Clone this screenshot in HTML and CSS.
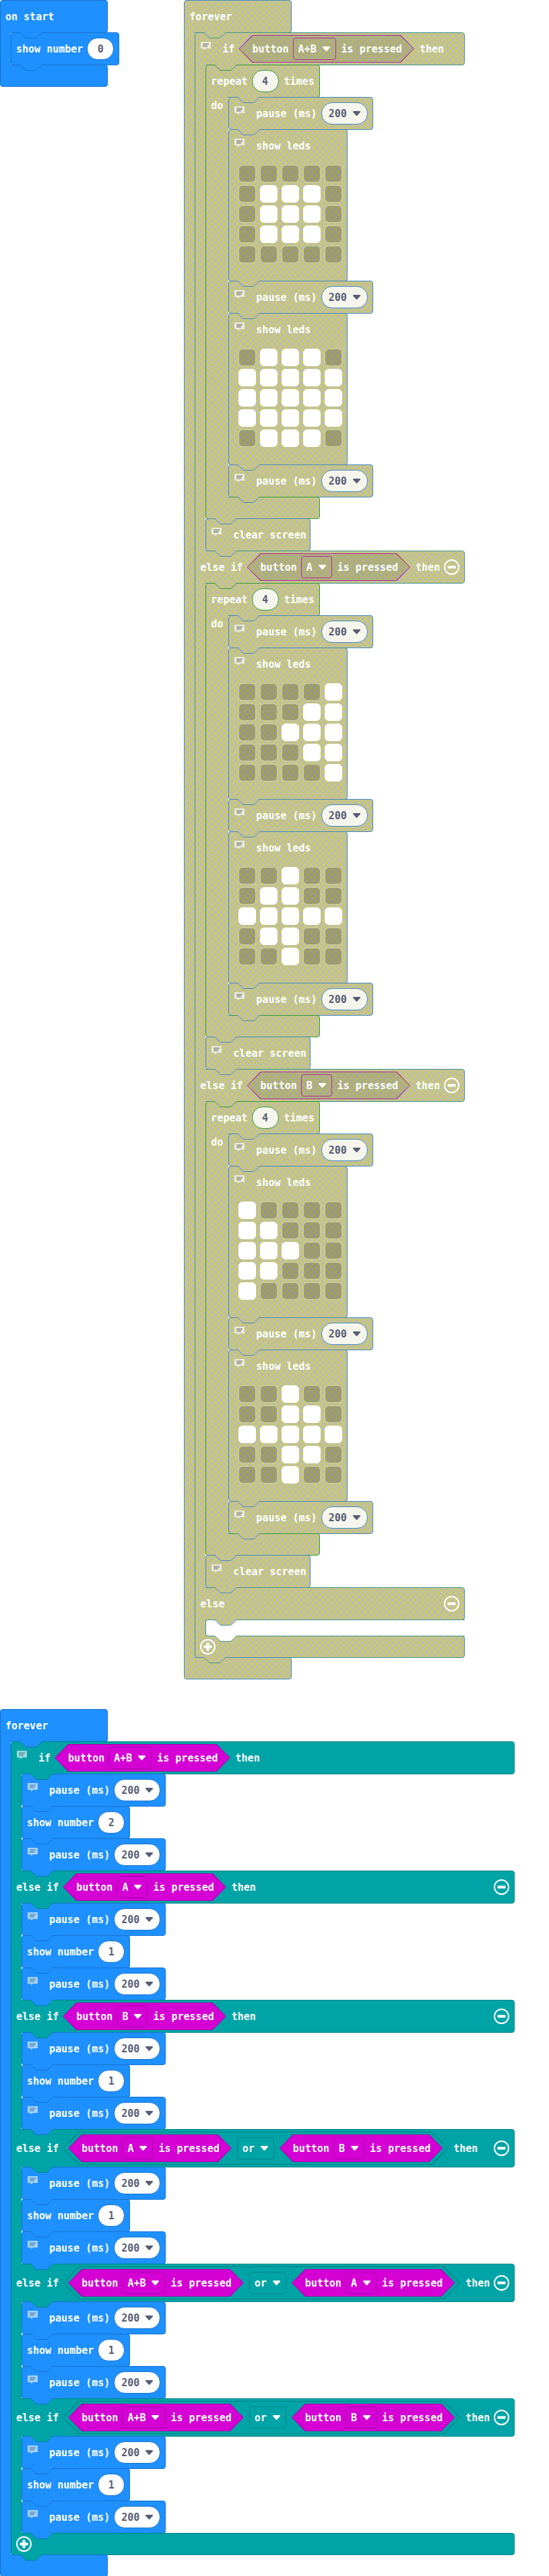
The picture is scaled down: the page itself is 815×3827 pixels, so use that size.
FILE: index.html
```html
<!DOCTYPE html>
<html lang="en">
<head>
<meta charset="utf-8">
<meta name="viewport" content="width=device-width, initial-scale=1">
<title>Blocks workspace</title>
<link rel="stylesheet" href="styles.css">
</head>
<body>
<svg class="defs" aria-hidden="true">
  <defs>
    <pattern id="hatch" width="9" height="9" patternUnits="userSpaceOnUse">
      <path d="M0 0H9V9H0Z" fill="#bbb"/>
      <path d="M-1 -1L10 10M10 -1L-1 10" stroke="#d4d430" stroke-width="1.2"/>
    </pattern>
  </defs>
</svg>
<main class="workspace" id="workspace"></main>
<script src="blocks.js"></script>
</body>
</html>
```

FILE: styles.css
```css
:root {
  --hatch: url("data:image/svg+xml,%3Csvg xmlns='http://www.w3.org/2000/svg' width='9' height='9'%3E%3Cpath d='M0 0H9V9H0Z' fill='%23bbb'/%3E%3Cpath d='M-1 -1L10 10M10 -1L-1 10' stroke='%23d4d430' stroke-width='1.2'/%3E%3C/svg%3E");
}

* { box-sizing: border-box; }

body {
  margin: 0;
  background: #fff;
  color: #fff;
  font: bold 15px/20px "DejaVu Sans Mono", "Liberation Mono", monospace;
}

input, select, button { font: inherit; margin: 0; }

.defs { position: absolute; width: 0; height: 0; }

.workspace {
  display: flex;
  flex-direction: column;
  align-items: flex-start;
  gap: 45px;
  padding-bottom: 1px;
}
.side-by-side {
  display: flex;
  align-items: flex-start;
  gap: 96px;
}

/* Themes */
.blue { --fill: #1e90ff; --edge: #1873cc; }
.teal { --fill: #00a4a6; --edge: #008387; }
.pink { --fill: #d400d4; --edge: #aa00aa; }
.off { --fill: var(--hatch); }
.off.blue { --edge: #4488c0; }
.off.teal { --edge: #3c9490; }
.off.green { --edge: #309a38; }
.off.pink { --edge: #b02a98; }

/* Blocks */
.block {
  display: flex;
  flex-direction: column;
  align-items: stretch;
}
.block.hat, .block.green { align-items: flex-start; }
.hat > .row { width: 160px; }
.block.green > .row { width: 170px; }

.row {
  position: relative;
  display: flex;
  align-items: center;
  gap: 8px;
  height: 49px;
  margin-bottom: -1px;
  padding: 0 7px;
  border: 1px solid var(--edge);
  border-radius: 4px;
  background: var(--fill);
  white-space: nowrap;
}
.row.tall { height: 57px; }
.row.foot { height: 33px; }
.row.open { border-bottom-left-radius: 0; }
.row.joined { border-top-left-radius: 0; }

.mouth { display: flex; }
.arm {
  position: relative;
  z-index: 1;
  flex: none;
  width: 16px;
  margin-bottom: -1px;
  padding: 3px 0 0 7px;
  border-left: 1px solid var(--edge);
  background: var(--fill);
}
.green > .mouth > .arm { width: 34px; }
.stack {
  display: flex;
  flex-direction: column;
  align-items: flex-start;
}
.mouth.vacant > .arm {
  width: 20px;
  margin-right: -4px;
}
.gap {
  position: relative;
  z-index: 2;
  flex: 1;
  height: 25px;
  margin-bottom: -1px;
  border: 1px solid var(--edge);
  border-right: 0;
  border-radius: 4px 0 0 4px;
  background: #fff;
}

.notch {
  position: absolute;
  z-index: 2;
  top: -1px;
  left: 11px;
  width: 36px;
  height: 9px;
  overflow: visible;
}
.notch.in { left: 27px; }
.notch.deep { left: 45px; }
.notch .line { fill: none; stroke: var(--edge); stroke-width: 1; }
.notch .body { fill: var(--fill); }
.notch.off .body { fill: url(#hatch); }
.notch.empty .body { fill: #fff; }

/* Row contents */
.label { margin-right: -2px; }
.comment {
  align-self: flex-start;
  flex: none;
  width: 15px;
  height: 13px;
  margin: 13px 9px 0 1px;
}
.comment .bubble { fill: #fff; opacity: .6; }
.comment .mark { fill: #1a5070; opacity: .32; }
.off .comment .bubble { opacity: .65; }
.off .comment .mark { fill: #888; opacity: .6; }

.toggle {
  flex: none;
  width: 23px;
  height: 23px;
  padding: 0;
  border: 0;
  background: none;
  color: #fff;
}
.toggle svg { display: block; }
.toggle.end { margin-left: auto; }

.hex {
  position: relative;
  display: flex;
  align-items: center;
  gap: 8px;
  height: 41px;
  padding: 0 20px;
  background: var(--edge);
  clip-path: polygon(20px 0, calc(100% - 20px) 0, 100% 50%, calc(100% - 20px) 100%, 20px 100%, 0 50%);
}
.hex::before {
  content: "";
  position: absolute;
  inset: 1px;
  background: var(--fill);
  clip-path: polygon(20px 0, calc(100% - 20px) 0, 100% 50%, calc(100% - 20px) 100%, 20px 100%, 0 50%);
}
.hex.off::before {
  background: linear-gradient(rgba(0, 0, 0, .1), rgba(0, 0, 0, .1)), var(--hatch);
}
.hex > * { position: relative; }
.hex.outer {
  height: 49px;
  padding: 0 8px;
  clip-path: polygon(24px 0, calc(100% - 24px) 0, 100% 50%, calc(100% - 24px) 100%, 24px 100%, 0 50%);
}
.hex.outer::before {
  clip-path: polygon(24px 0, calc(100% - 24px) 0, 100% 50%, calc(100% - 24px) 100%, 24px 100%, 0 50%);
}

.field { position: relative; display: flex; }
.field select {
  appearance: none;
  height: 33px;
  padding: 0 27px 0 7px;
  border: 1px solid var(--edge);
  border-radius: 4px;
  background: transparent;
  color: #fff;
}
.field .arrow {
  position: absolute;
  top: 13px;
  right: 9px;
  width: 11px;
  height: 7px;
  fill: currentColor;
  pointer-events: none;
}
.field.pill { color: #575e75; }
.field.pill select {
  padding: 0 29px 0 10px;
  border-radius: 16px;
  background: #fff;
  color: #575e75;
}
.field.pill .arrow { right: 11px; }
.number {
  width: 40px;
  height: 33px;
  padding: 0;
  border: 1px solid var(--edge);
  border-radius: 16px;
  background: #fff;
  color: #575e75;
  text-align: center;
}
.off .field.pill select, .off .number { background: rgba(255, 255, 255, .84); }

/* LED matrix */
.row.matrix {
  flex-direction: column;
  align-items: stretch;
  gap: 0;
  height: auto;
  padding: 0 7px 26px;
}
.matrix .title {
  display: flex;
  align-items: center;
  gap: 8px;
  height: 47px;
}
.leds {
  display: grid;
  grid-template-columns: repeat(5, 26px);
  gap: 4px 6px;
  padding: 5px 0 0 7px;
}
.led {
  appearance: none;
  width: 26px;
  height: 26px;
  border: 1px solid rgba(255, 255, 255, .2);
  border-radius: 6px;
  background: rgba(0, 0, 0, .2);
  background-clip: padding-box;
}
.led:checked { background: #fff; border-color: #fff; }
```

FILE: blocks.js
```js
const notch = (theme, place = "") =>
  `<svg class="notch ${theme} ${place}" viewBox="0 0 36 9" aria-hidden="true">
    <path class="body" d="M0 0c2 0 3 1 4 2l4 4c1 1 2 2 4 2h12c2 0 3-1 4-2l4-4c1-1 2-2 4-2z"/>
    <path class="line" d="M0 .5c2 0 3 1 4 2l4 4c1 1 2 2 4 2h12c2 0 3-1 4-2l4-4c1-1 2-2 4-2"/>
  </svg>`;

const label = (text) => `<span class="label">${text}</span>`;

const comment =
  `<svg class="comment" viewBox="0 0 15 13" aria-hidden="true">
    <path class="bubble" d="M0 0H15V10H8L5.500 12.500L4 10H0Z"/>
    <path class="mark" d="M3 2H12V5H10V8H3Z"/>
  </svg>`;

const arrow =
  `<svg class="arrow" viewBox="0 0 11 7" aria-hidden="true">
    <path d="M1 0H10Q11 0 11 1Q11 2 9 3.500L6.500 6.500Q5.500 7.400 4.500 6.500L2 3.500Q0 2 0 1Q0 0 1 0Z"/>
  </svg>`;

const choice = (value, name, kind = "") =>
  `<span class="field ${kind}"><select aria-label="${name}"><option>${value}</option></select>${arrow}</span>`;

const number = (value, name) =>
  `<input class="number" type="text" inputmode="numeric" value="${value}" aria-label="${name}">`;

const toggle = (sign, name, place = "") =>
  `<button class="toggle ${place}" type="button" aria-label="${name}">
    <svg width="23" height="23" viewBox="0 0 23 23" fill="none" stroke="currentColor">
      <circle cx="11.500" cy="11.500" r="10.500" stroke-width="2"/>
      <path stroke-width="4" d="${sign === "+" ? "M5.500 11.500H17.500M11.500 5.500V17.500" : "M5.500 11.500H17.500"}"/>
    </svg>
  </button>`;

const row = (theme, content, extra = "") =>
  `<div class="row ${theme} ${extra}">${content}</div>`;

const pressed = (button, off) =>
  `<span class="hex pink ${off}">${label("button")}${choice(button, "button")}${label("is pressed")}</span>`;

const either = (a, b) =>
  `<span class="hex outer teal">${pressed(a, "")}${choice("or", "operator")}${pressed(b, "")}</span>`;

const mouth = (content, arm = "") =>
  `<div class="mouth"><div class="arm">${arm}</div><div class="stack">${content}</div></div>`;

const pause = (off, above) =>
  row(`blue ${off}`, notch(above) + comment + label("pause (ms)") + choice("200", "pause (ms)", "pill"));

const showNumber = (value, above) =>
  row("blue", notch(above) + label("show number") + number(value, "show number"));

const showLeds = (pattern) => {
  const leds = [...pattern.replace(/ /g, "")].map((c, i) =>
    `<input class="led" type="checkbox" aria-label="LED ${i + 1}"${c === "#" ? " checked" : ""}>`).join("");
  return row("blue off",
    `${notch("blue off")}<div class="title">${comment}${label("show leds")}</div><div class="leds">${leds}</div>`,
    "matrix");
};

const hat = (theme, name, content, below) =>
  `<section class="block hat ${theme}">
    ${row(theme, label(name), "open")}
    ${mouth(content)}
    ${row(theme, notch(below, "in"), "foot joined")}
  </section>`;

const repeat = (frames) =>
  `<div class="block green off">
    ${row("green off", notch("green off") + label("repeat") + number(4, "repeat times") + label("times"), "open")}
    ${mouth(pause("off", "blue off") + frames.map((f) => showLeds(f) + pause("off", "blue off")).join(""), "do")}
    ${row("green off", notch("blue off", "deep"), "foot joined")}
  </div>`;

const clearScreen = row("blue off", notch("blue off") + comment + label("clear screen"));

const animations = [
  ["A+B", ["..... .###. .###. .###. .....", ".###. ##### ##### ##### .###."]],
  ["A", ["....# ...## ..### ...## ....#", "..#.. .##.. ##### .##.. ..#.."]],
  ["B", ["#.... ##... ###.. ##... #....", "..#.. ..##. ##### ..##. ..#.."]],
];

const animated = `<div class="block teal off">
  ${animations.map(([button, frames], i) =>
    row("teal off",
      (i ? notch("blue off", "in") + label("else if") : notch("teal off") + comment + label("if")) +
      pressed(button, "off") + label("then") + (i ? toggle("-", "remove branch", "end") : ""),
      i ? "open joined" : "open") +
    mouth(repeat(frames) + clearScreen)).join("")}
  ${row("teal off", notch("blue off", "in") + label("else") + toggle("-", "remove branch", "end"), "open joined")}
  <div class="mouth vacant"><div class="arm"></div><div class="gap">${notch("teal off")}</div></div>
  ${row("teal off", notch("teal off empty", "in") + toggle("+", "add branch"), "foot joined")}
</div>`;

const branches = [
  [pressed("A+B", ""), 2, ""],
  [pressed("A", ""), 1, ""],
  [pressed("B", ""), 1, ""],
  [either("A", "B"), 1, "tall"],
  [either("A+B", "A"), 1, "tall"],
  [either("A+B", "B"), 1, "tall"],
];

const counted = `<div class="block teal">
  ${branches.map(([test, value, size], i) =>
    row("teal",
      (i ? notch("blue", "in") + label("else if") : notch("blue") + comment + label("if")) +
      test + label("then") + (i ? toggle("-", "remove branch", "end") : ""),
      `open ${size} ${i ? "joined" : ""}`) +
    mouth(pause("", "teal") + showNumber(value, "blue") + pause("", "blue"))).join("")}
  ${row("teal", notch("blue", "in") + toggle("+", "add branch"), "foot joined")}
</div>`;

document.getElementById("workspace").innerHTML =
  `<div class="side-by-side">
    ${hat("blue", "on start", showNumber(0, "blue"), "blue")}
    ${hat("blue off", "forever", animated, "teal off")}
  </div>` +
  hat("blue", "forever", counted, "teal");
```
